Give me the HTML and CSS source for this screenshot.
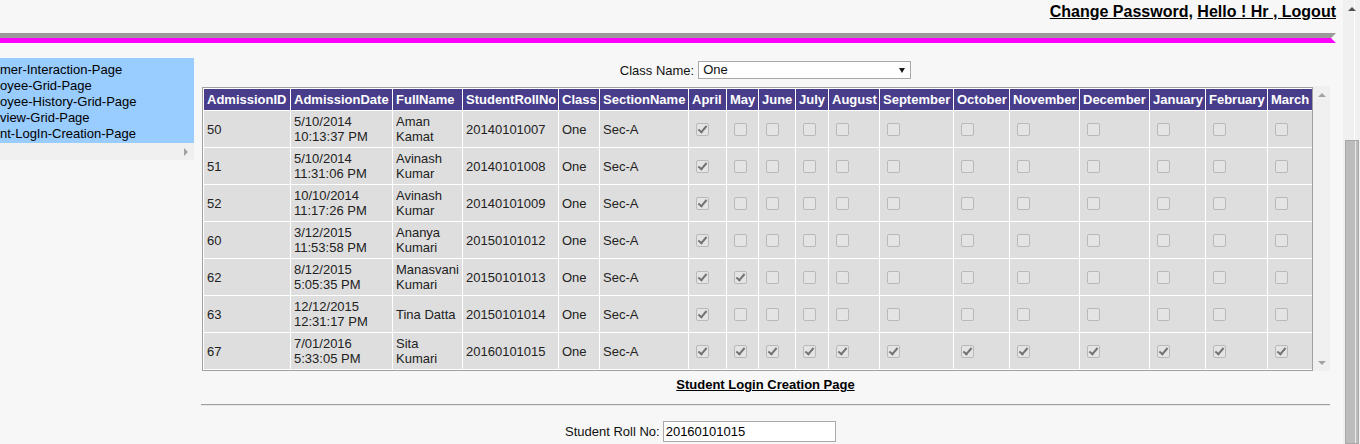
FILE: index.html
```html
<!DOCTYPE html>
<html>
<head>
	<title>Student Login Creation</title>
	<meta charset="utf-8">
	<link rel="stylesheet" href="styles.css">
</head>
<body>
<div class="window">
	<div class="page">
		<div class="topbar">
			<a href="#">Change Password,</a> <a href="#">Hello ! Hr , Logout</a>
		</div>
		<div class="stripe"></div>

		<div class="layout">
			<div class="menu">
				<div class="menu-list">
					<div>mer-Interaction-Page</div>
					<div>oyee-Grid-Page</div>
					<div>oyee-History-Grid-Page</div>
					<div>view-Grid-Page</div>
					<div>nt-LogIn-Creation-Page</div>
				</div>
				<div class="menu-hscroll"><span class="btn"><span class="tri-right"></span></span></div>
			</div>

			<div class="content">
				<div class="filter">
					<label>Class Name:</label>
					<div class="select">One</div>
				</div>

				<div class="grid-scroll">
					<div class="grid-frame">
						<table class="grid">
							<tr>
								<th>AdmissionID</th><th>AdmissionDate</th><th>FullName</th><th>StudentRollNo</th><th>Class</th><th>SectionName</th>
								<th>April</th><th>May</th><th>June</th><th>July</th><th>August</th><th>September</th>
								<th>October</th><th>November</th><th>December</th><th>January</th><th>February</th><th>March</th>
							</tr>
							<tr>
								<td>50</td><td>5/10/2014 10:13:37 PM</td><td>Aman Kamat</td><td>20140101007</td><td>One</td><td>Sec-A</td>
								<td><span class="cb on"></span></td><td><span class="cb"></span></td><td><span class="cb"></span></td><td><span class="cb"></span></td><td><span class="cb"></span></td><td><span class="cb"></span></td>
								<td><span class="cb"></span></td><td><span class="cb"></span></td><td><span class="cb"></span></td><td><span class="cb"></span></td><td><span class="cb"></span></td><td><span class="cb"></span></td>
							</tr>
							<tr>
								<td>51</td><td>5/10/2014 11:31:06 PM</td><td>Avinash Kumar</td><td>20140101008</td><td>One</td><td>Sec-A</td>
								<td><span class="cb on"></span></td><td><span class="cb"></span></td><td><span class="cb"></span></td><td><span class="cb"></span></td><td><span class="cb"></span></td><td><span class="cb"></span></td>
								<td><span class="cb"></span></td><td><span class="cb"></span></td><td><span class="cb"></span></td><td><span class="cb"></span></td><td><span class="cb"></span></td><td><span class="cb"></span></td>
							</tr>
							<tr>
								<td>52</td><td>10/10/2014 11:17:26 PM</td><td>Avinash Kumar</td><td>20140101009</td><td>One</td><td>Sec-A</td>
								<td><span class="cb on"></span></td><td><span class="cb"></span></td><td><span class="cb"></span></td><td><span class="cb"></span></td><td><span class="cb"></span></td><td><span class="cb"></span></td>
								<td><span class="cb"></span></td><td><span class="cb"></span></td><td><span class="cb"></span></td><td><span class="cb"></span></td><td><span class="cb"></span></td><td><span class="cb"></span></td>
							</tr>
							<tr>
								<td>60</td><td>3/12/2015 11:53:58 PM</td><td>Ananya Kumari</td><td>20150101012</td><td>One</td><td>Sec-A</td>
								<td><span class="cb on"></span></td><td><span class="cb"></span></td><td><span class="cb"></span></td><td><span class="cb"></span></td><td><span class="cb"></span></td><td><span class="cb"></span></td>
								<td><span class="cb"></span></td><td><span class="cb"></span></td><td><span class="cb"></span></td><td><span class="cb"></span></td><td><span class="cb"></span></td><td><span class="cb"></span></td>
							</tr>
							<tr>
								<td>62</td><td>8/12/2015 5:05:35 PM</td><td>Manasvani Kumari</td><td>20150101013</td><td>One</td><td>Sec-A</td>
								<td><span class="cb on"></span></td><td><span class="cb on"></span></td><td><span class="cb"></span></td><td><span class="cb"></span></td><td><span class="cb"></span></td><td><span class="cb"></span></td>
								<td><span class="cb"></span></td><td><span class="cb"></span></td><td><span class="cb"></span></td><td><span class="cb"></span></td><td><span class="cb"></span></td><td><span class="cb"></span></td>
							</tr>
							<tr>
								<td>63</td><td>12/12/2015 12:31:17 PM</td><td>Tina Datta</td><td>20150101014</td><td>One</td><td>Sec-A</td>
								<td><span class="cb on"></span></td><td><span class="cb"></span></td><td><span class="cb"></span></td><td><span class="cb"></span></td><td><span class="cb"></span></td><td><span class="cb"></span></td>
								<td><span class="cb"></span></td><td><span class="cb"></span></td><td><span class="cb"></span></td><td><span class="cb"></span></td><td><span class="cb"></span></td><td><span class="cb"></span></td>
							</tr>
							<tr>
								<td>67</td><td>7/01/2016 5:33:05 PM</td><td>Sita Kumari</td><td>20160101015</td><td>One</td><td>Sec-A</td>
								<td><span class="cb on"></span></td><td><span class="cb on"></span></td><td><span class="cb on"></span></td><td><span class="cb on"></span></td><td><span class="cb on"></span></td><td><span class="cb on"></span></td>
								<td><span class="cb on"></span></td><td><span class="cb on"></span></td><td><span class="cb on"></span></td><td><span class="cb on"></span></td><td><span class="cb on"></span></td><td><span class="cb on"></span></td>
							</tr>
						</table>
					</div>
					<div class="inner-bar">
						<span class="btn"><span class="tri-up"></span></span>
						<span class="btn"><span class="tri-down"></span></span>
					</div>
				</div>

				<div class="link-row"><a href="#">Student Login Creation Page</a></div>
				<hr class="divider">

				<div class="roll-row">
					<label>Student Roll No:</label>
					<input type="text" value="20160101015">
				</div>
			</div>
		</div>
	</div>

	<div class="page-scrollbar">
		<span class="btn"><span class="tri-up dark"></span></span>
		<div class="thumb"></div>
	</div>
</div>
</body>
</html>
```

FILE: styles.css
```css
* {
	font-family: "Liberation Sans", Arial, sans-serif;
}
body {
	margin: 0;
	background-color: #f7f7f7;
	color: #000;
	font-size: 13px;
}

.window {
	display: flex;
	height: 444px;
	overflow: hidden;
}
.page {
	width: 1343px;
	flex: none;
}

/* header */
.topbar {
	height: 33px;
	box-sizing: border-box;
	padding: 3px 7px 0 0;
	text-align: right;
	font-size: 16px;
	line-height: 18px;
	font-weight: bold;
}
.topbar a {
	color: #000;
	text-decoration: underline;
}
.stripe {
	height: 10px;
	margin-right: 7px;
	background: linear-gradient(#9a9a9a 0, #9a9a9a 5px, #ff00ff 5px, #ff00ff 10px);
	clip-path: polygon(0 0, 100% 0, calc(100% - 5px) 50%, 100% 100%, 0 100%);
}

.layout {
	display: flex;
	align-items: flex-start;
}

/* left menu */
.menu {
	width: 194px;
	flex: none;
	margin-top: 15px;
}
.menu-list {
	background-color: #99ccff;
	padding: 4px 0 1px;
	line-height: 16px;
	white-space: nowrap;
	overflow: hidden;
	color: #000;
}
.menu-hscroll {
	height: 17px;
	background-color: #f0f0f0;
	display: flex;
	justify-content: flex-end;
}

.btn {
	width: 17px;
	height: 17px;
	display: flex;
	align-items: center;
	justify-content: center;
	flex: none;
}
.tri-right {
	border-left: 4px solid #a3a3a3;
	border-top: 4px solid transparent;
	border-bottom: 4px solid transparent;
}
.tri-up {
	border-bottom: 4px solid #a3a3a3;
	border-left: 4px solid transparent;
	border-right: 4px solid transparent;
}
.tri-down {
	border-top: 4px solid #a3a3a3;
	border-left: 4px solid transparent;
	border-right: 4px solid transparent;
}
.tri-up.dark {
	border-bottom-color: #505050;
}

/* main */
.content {
	width: 1129px;
	margin-left: 7px;
	padding-top: 18px;
}
.filter {
	display: flex;
	justify-content: center;
	align-items: center;
	gap: 4px;
	height: 18px;
	color: #111;
}
.select {
	position: relative;
	width: 213px;
	height: 18px;
	box-sizing: border-box;
	border: 1px solid #a9a9a9;
	background-color: #fff;
	padding-left: 4px;
	line-height: 16px;
}
.select::after {
	content: "";
	position: absolute;
	right: 5px;
	top: 6px;
	border-top: 5px solid #1a1a1a;
	border-left: 3px solid transparent;
	border-right: 3px solid transparent;
}

.grid-scroll {
	display: flex;
	width: 1128px;
	margin: 7px 0 0 1px;
}
.grid-frame {
	border: 1px solid #a0a0a0;
	margin-top: 1px;
}
.inner-bar {
	width: 17px;
	background-color: #f0f0f0;
	display: flex;
	flex-direction: column;
	justify-content: space-between;
}

table.grid {
	border-collapse: separate;
	border-spacing: 0;
	table-layout: fixed;
	width: 1109px;
	border-bottom: 1px solid #fff;
}
.grid th, .grid td {
	border-top: 1px solid #fff;
	border-left: 1px solid #fff;
	padding: 3px;
	line-height: 15px;
	font-size: 13px;
	text-align: left;
	vertical-align: middle;
}
.grid th {
	background-color: #483d8b;
	color: #fff;
	font-weight: bold;
	white-space: nowrap;
}
.grid td {
	background-color: #dedede;
	color: #222;
}
.grid th:nth-child(1) { width: 80px; }
.grid th:nth-child(2) { width: 95px; }
.grid th:nth-child(3) { width: 63px; }
.grid th:nth-child(4) { width: 89px; }
.grid th:nth-child(5) { width: 34px; }
.grid th:nth-child(6) { width: 82px; }
.grid th:nth-child(7) { width: 31px; }
.grid th:nth-child(8) { width: 25px; }
.grid th:nth-child(9) { width: 30px; }
.grid th:nth-child(10) { width: 26px; }
.grid th:nth-child(11) { width: 44px; }
.grid th:nth-child(12) { width: 67px; }
.grid th:nth-child(13) { width: 49px; }
.grid th:nth-child(14) { width: 63px; }
.grid th:nth-child(15) { width: 63px; }
.grid th:nth-child(16) { width: 49px; }
.grid th:nth-child(17) { width: 55px; }
.grid th:nth-child(18) { width: 38px; }

/* disabled checkboxes */
.cb {
	display: inline-block;
	position: relative;
	width: 11px;
	height: 11px;
	margin: 3px 3px 3px 4px;
	border: 1px solid #b9b9b9;
	border-radius: 2px;
	background-color: #e4e4e4;
	vertical-align: middle;
}
.cb.on::after {
	content: "";
	position: absolute;
	left: 3px;
	top: 0px;
	width: 3px;
	height: 7px;
	border: solid #737373;
	border-width: 0 2px 2px 0;
	transform: rotate(40deg);
}

.link-row {
	margin-top: 6px;
	text-align: center;
	line-height: 15px;
	font-weight: bold;
}
.link-row a {
	color: #000;
	text-decoration: underline;
}
hr.divider {
	margin: 12px 0 0;
	height: 0;
	border: 0;
	border-top: 1px solid #a0a0a0;
	border-bottom: 1px solid #e6e6e6;
}
.roll-row {
	display: flex;
	align-items: center;
	gap: 3px;
	margin-top: 15px;
	padding-left: 364px;
	color: #111;
}
.roll-row input {
	width: 173px;
	height: 21px;
	box-sizing: border-box;
	margin: 0;
	padding: 0 2px;
	border: 1px solid #a9a9a9;
	background-color: #fff;
	color: #000;
	font-size: 13px;
}

/* browser scrollbar */
.page-scrollbar {
	width: 17px;
	flex: none;
	display: flex;
	flex-direction: column;
	align-items: center;
	background: linear-gradient(to right, #f0f0f0 11px, #fff 11px, #fff 12px, #f0f0f0 12px);
}
.page-scrollbar .thumb {
	width: 14px;
	flex: 1;
	margin-top: 123px;
	box-sizing: border-box;
	border: 1px solid #a8a8a8;
	background: linear-gradient(to right, #bcbcbc 9px, #e9e9e9 9px, #e9e9e9 10px, #bcbcbc 10px);
}
```
